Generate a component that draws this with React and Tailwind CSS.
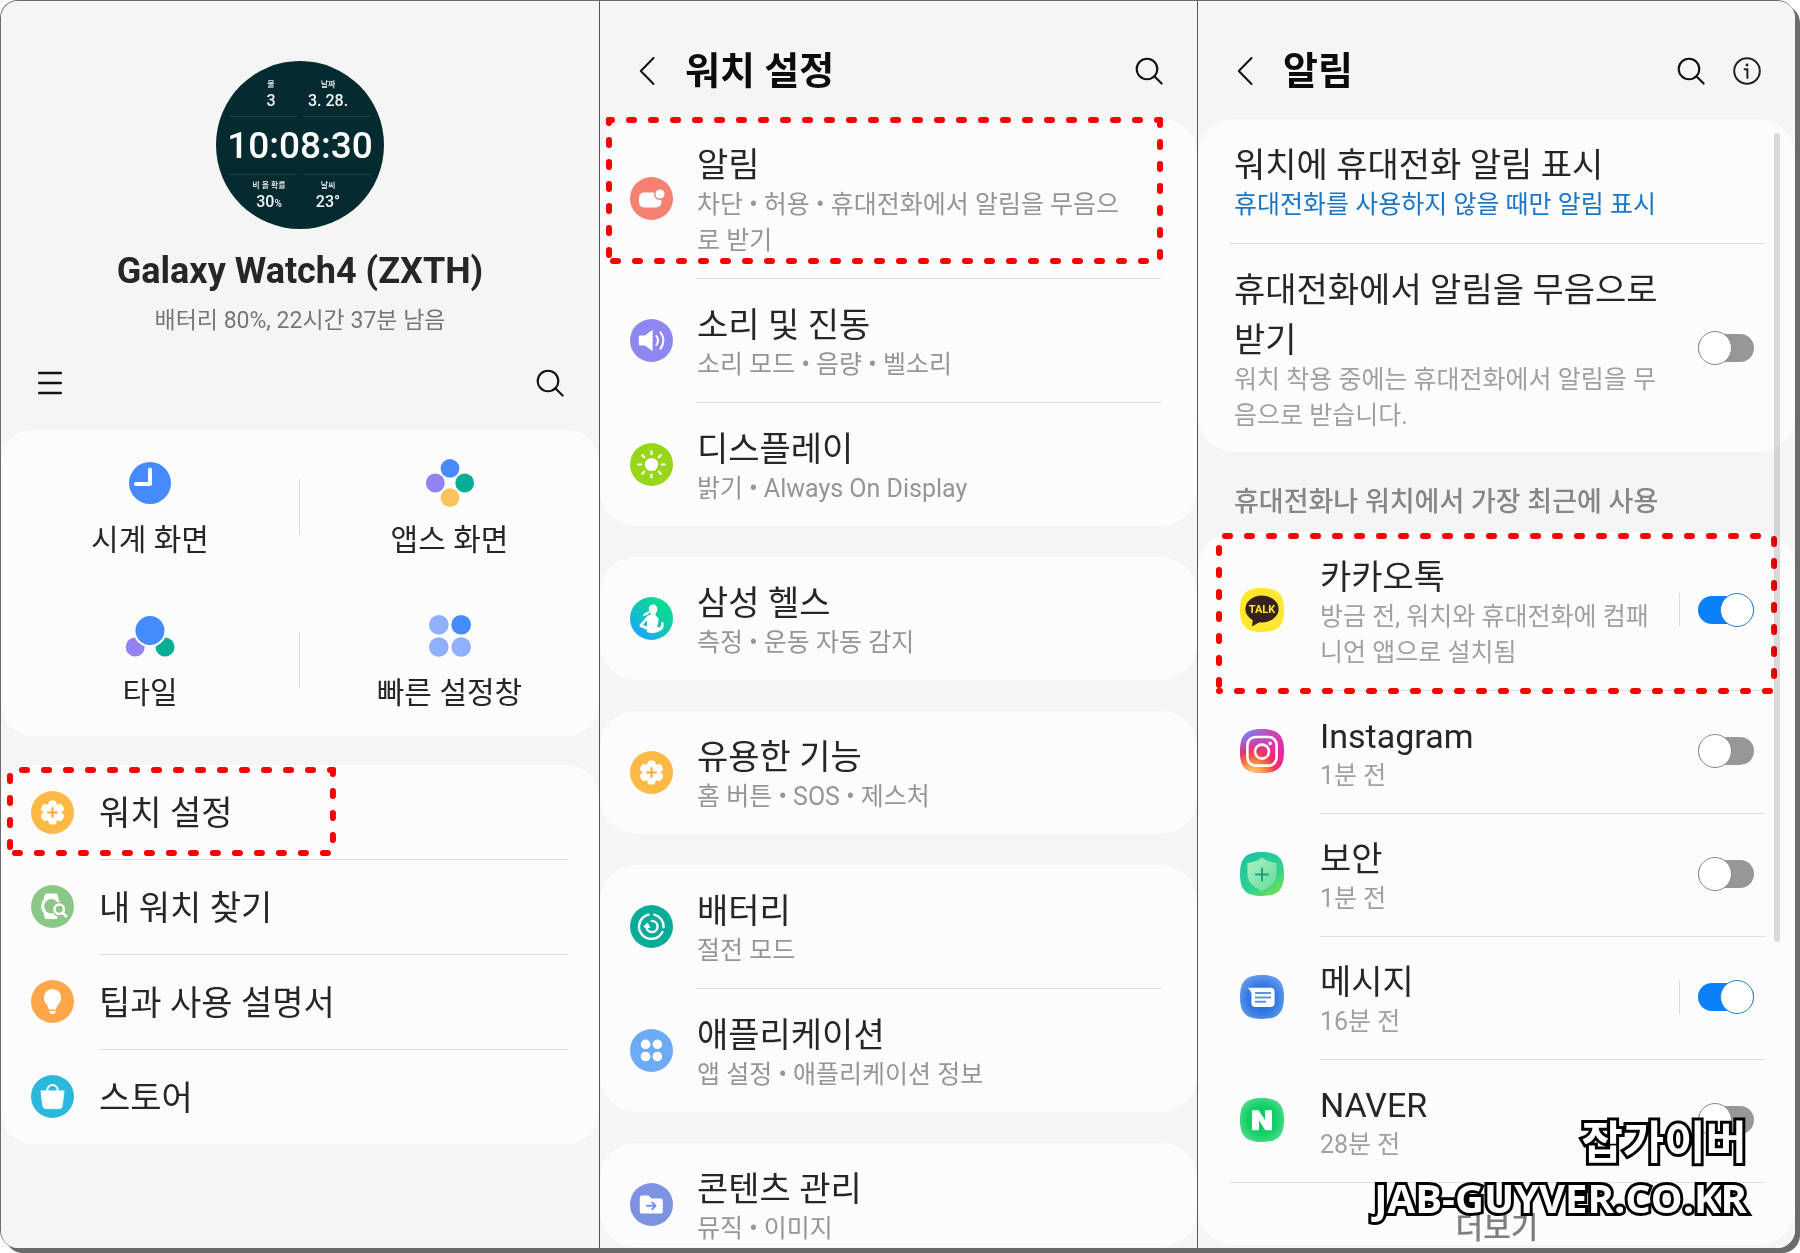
import React from "react";

/* ---------- icons ---------- */

function SearchIcon() {
  return (
    <svg viewBox="0 0 28 28" className="size-7" fill="none" stroke="#111" strokeWidth="2.1" strokeLinecap="round">
      <circle cx="12" cy="12" r="10.3" />
      <path d="M19.6 19.6 L26.6 26.6" />
    </svg>
  );
}

function InfoIcon() {
  return (
    <svg viewBox="0 0 28 28" className="size-7" fill="none" stroke="#222" strokeWidth="2" strokeLinecap="round" strokeLinejoin="round">
      <circle cx="14" cy="14" r="12.8" />
      <path d="M11.6 12.2 H14.4 V21" />
      <circle cx="14" cy="8" r="1.4" fill="#222" stroke="none" />
    </svg>
  );
}

function BackIcon() {
  return (
    <svg viewBox="0 0 16 28" className="h-7 w-4" fill="none" stroke="#111" strokeWidth="2" strokeLinecap="round" strokeLinejoin="round">
      <path d="M14.5 1 L1.8 14 L14.5 27" />
    </svg>
  );
}

function MenuIcon() {
  return (
    <svg viewBox="0 0 24 24" className="size-6" fill="none" stroke="#111" strokeWidth="2.4" strokeLinecap="round">
      <path d="M1.2 2 H22.8 M1.2 12 H22.8 M1.2 22 H22.8" />
    </svg>
  );
}

function Disc({ color, children }) {
  return (
    <svg viewBox="0 0 43 43" className="size-[43px] shrink-0">
      <circle cx="21.5" cy="21.5" r="21.5" fill={color} />
      {children}
    </svg>
  );
}

function GearIcon() {
  return (
    <Disc color="#fdb945">
      <g fill="#fff">
        <circle cx="21.5" cy="21.5" r="9.4" />
        {[0, 60, 120, 180, 240, 300].map((a) => (
          <rect key={a} x="17.6" y="9.4" width="7.8" height="8" rx="2.6" transform={`rotate(${a} 21.5 21.5)`} />
        ))}
      </g>
      <path d="M21.5 17 V26 M17 21.5 H26" stroke="#f8a92c" strokeWidth="1.9" strokeLinecap="round" />
    </Disc>
  );
}

function FindIcon() {
  return (
    <Disc color="#8bc786">
      <path d="M14.6 9 H25.6 L27.2 13.6 H13 Z M13 29 H27 L25.6 33.6 H14.6 Z" fill="#fff" stroke="#fff" strokeWidth="1" strokeLinejoin="round" />
      <circle cx="20" cy="21.3" r="10" fill="#fff" />
      <circle cx="20.4" cy="21.3" r="7.2" fill="#8bc786" />
      <circle cx="28.6" cy="24.4" r="7.4" fill="#8bc786" />
      <circle cx="28.2" cy="24.2" r="4.7" fill="#8bc786" stroke="#fff" strokeWidth="2.5" />
      <path d="M32 28 L35 31.2" stroke="#fff" strokeWidth="2.8" strokeLinecap="round" />
      <path d="M14.8 29 H23 L24 33.6 H14.6 Z" fill="#fff" />
    </Disc>
  );
}

function BulbIcon() {
  return (
    <Disc color="#fea74a">
      <path d="M21.5 9 A8.7 8.7 0 0 0 12.8 17.7 C12.8 22.5 17 24.4 17.6 28.4 Q17.8 29.6 19 29.6 H24 Q25.2 29.6 25.4 28.4 C26 24.4 30.2 22.5 30.2 17.7 A8.7 8.7 0 0 0 21.5 9 Z" fill="#fff" />
      <path d="M18.2 31 H24.8 Q24.4 34 21.5 34 Q18.6 34 18.2 31 Z" fill="#fff" />
    </Disc>
  );
}

function BagIcon() {
  return (
    <Disc color="#2ab9dc">
      <path d="M9.8 15.8 H33.2 L31.4 30.6 Q31 33.8 28 33.8 H15 Q12 33.8 11.6 30.6 Z" fill="#fff" stroke="#fff" strokeWidth="0.6" strokeLinejoin="round" />
      <path d="M16.2 16.4 V15.4 A5.3 5.3 0 0 1 26.8 15.4 V16.4" fill="none" stroke="#fff" strokeWidth="2" />
    </Disc>
  );
}

function NotificationIcon() {
  return (
    <Disc color="#f68171">
      <rect x="9" y="15.6" width="22.4" height="14.8" rx="5" fill="#fff" />
      <circle cx="30" cy="17" r="6" fill="#f68171" />
      <circle cx="30" cy="17" r="4.6" fill="#fff" />
    </Disc>
  );
}

function SoundIcon() {
  return (
    <Disc color="#8f87f0">
      <path d="M10.2 16.6 H15 L22.6 10.8 V32.2 L15 26.4 H10.2 Q8.8 26.4 8.8 25 V18 Q8.8 16.6 10.2 16.6 Z" fill="#fff" />
      <g fill="none" stroke="#fff" strokeWidth="2" strokeLinecap="round">
        <path d="M26.4 17 Q29.6 21.5 26.4 26" />
        <path d="M30.4 13.2 Q36.6 21.5 30.4 29.8" />
      </g>
    </Disc>
  );
}

function SunIcon() {
  return (
    <Disc color="#98d61a">
      <circle cx="21.5" cy="21.5" r="6.6" fill="#fff" />
      {[0, 45, 90, 135, 180, 225, 270, 315].map((a) => (
        <path key={a} d="M21.5 8.4 V11.2" stroke="#fff" strokeWidth="2.2" strokeLinecap="round" transform={`rotate(${a} 21.5 21.5)`} />
      ))}
    </Disc>
  );
}

function HealthIcon() {
  return (
    <Disc color="url(#healthFill)">
      <defs>
        <linearGradient id="healthFill" x1="0.15" y1="0.9" x2="0.8" y2="0.2">
          <stop offset="0" stopColor="#1ca6ff" />
          <stop offset="0.55" stopColor="#12c6b4" />
          <stop offset="1" stopColor="#08dc92" />
        </linearGradient>
      </defs>
      <ellipse cx="23" cy="12.4" rx="4.3" ry="5" fill="#fff" />
      <path d="M18.4 14.2 Q15 15.4 12.4 18.4 Q16.4 19.4 19.2 16.6 Z" fill="#fff" />
      <path d="M20.8 15 H25.6 V18.4 Q28.4 20 28.4 23.4 Q28.4 26.6 27 29.4 Q29 31.2 30.6 29.4 Q31.6 28 31.2 25.8 Q32 24.2 33.4 25.4 Q34.6 30.4 31.4 33 Q25.4 38 17.4 35.2 Q15.8 34.4 17.4 33 L10 29.8 Q8.8 29 9.6 27.8 L17 19.6 Q18.6 18 20.8 17.6 Z" fill="#fff" />
      <path d="M16.8 23.2 L13 27.8 L16.4 29.8 Q17.6 26.6 16.8 23.2 Z" fill="#19b8d0" />
    </Disc>
  );
}

function BatteryIcon() {
  return (
    <Disc color="#08ac98">
      <g fill="none" stroke="#fff" strokeWidth="2.4" strokeLinecap="round">
        <path d="M18.6 9.6 A12.3 12.3 0 1 0 32.4 27" />
        <path d="M24.4 9.6 A12.3 12.3 0 0 1 33.6 22.2" />
        <path d="M21.8 15.9 A5.6 5.6 0 1 1 16.4 22.6" />
      </g>
      <path d="M13.8 21.8 L17.4 18 L20 22.6 Z" fill="#fff" stroke="#fff" strokeLinejoin="round" />
    </Disc>
  );
}

function AppsIcon() {
  return (
    <Disc color="#6cabf4">
      <g fill="#fff">
        <circle cx="15.6" cy="15.3" r="4.8" />
        <circle cx="27.4" cy="15.3" r="4.8" />
        <circle cx="15.6" cy="27.5" r="4.8" />
        <circle cx="27.4" cy="27.5" r="4.8" />
      </g>
    </Disc>
  );
}

function FolderIcon() {
  return (
    <Disc color="#7c93e2">
      <path d="M12 12.6 H18.4 L21.4 15.6 H30.6 Q32.8 15.6 32.8 17.8 V28.4 Q32.8 30.6 30.6 30.6 H12 Q9.8 30.6 9.8 28.4 V14.8 Q9.8 12.6 12 12.6 Z" fill="#fff" />
      <path d="M17 22.8 H25.4 M22.2 19.4 L25.6 22.8 L22.2 26.2" fill="none" stroke="#7c93e2" strokeWidth="2" strokeLinecap="round" strokeLinejoin="round" />
    </Disc>
  );
}

function ClockIcon() {
  return (
    <svg viewBox="0 0 50 50" className="size-[50px]">
      <circle cx="25" cy="25" r="21" fill="#468bfd" />
      <path d="M25 11.4 V26 H11" fill="none" stroke="#fff" strokeWidth="4" strokeLinecap="round" strokeLinejoin="round" />
    </svg>
  );
}

function AppsScreenIcon() {
  return (
    <svg viewBox="0 0 50 50" className="size-[50px]">
      <circle cx="25" cy="10.4" r="9.4" fill="#468bfd" />
      <circle cx="10.3" cy="25" r="9.4" fill="#9183f0" />
      <circle cx="39.7" cy="25" r="9.4" fill="#06ae95" />
      <circle cx="25" cy="39.6" r="9.4" fill="#fac25e" />
    </svg>
  );
}

function TilesIcon() {
  return (
    <svg viewBox="0 0 50 50" className="size-[50px]">
      <circle cx="10.2" cy="36" r="9.5" fill="#9183f0" />
      <circle cx="40" cy="36" r="9.5" fill="#06ae95" />
      <circle cx="25" cy="19.4" r="15.6" fill="#468bfd" stroke="#fcfcfc" strokeWidth="2.2" />
    </svg>
  );
}

function QuickPanelIcon() {
  return (
    <svg viewBox="0 0 50 50" className="size-[50px]">
      <circle cx="13.8" cy="13.8" r="9.8" fill="#8fb1fb" />
      <circle cx="36.2" cy="13.8" r="9.8" fill="#468bfd" />
      <circle cx="13.8" cy="36" r="9.8" fill="#8fb1fb" />
      <circle cx="36.2" cy="36" r="9.8" fill="#8fb1fb" />
    </svg>
  );
}

const squircle = "M22 0 C38 0 44 6 44 22 C44 38 38 44 22 44 C6 44 0 38 0 22 C0 6 6 0 22 0 Z";

function TalkIcon() {
  return (
    <svg viewBox="0 0 44 44" className="size-11">
      <path d={squircle} fill="#fde82f" />
      <ellipse cx="22" cy="21" rx="16.6" ry="13.4" fill="#37221f" />
      <path d="M13 30 L12 38.4 L21.6 33 Z" fill="#37221f" />
      <text x="22" y="25.2" textAnchor="middle" fill="#fde82f" fontSize="11" fontWeight="700" fontFamily="Roboto, sans-serif">TALK</text>
    </svg>
  );
}

function InstagramIcon() {
  return (
    <svg viewBox="0 0 44 44" className="size-11">
      <defs>
        <linearGradient id="igBase" x1="0.1" y1="0" x2="0.8" y2="0.8">
          <stop offset="0" stopColor="#6d86f2" />
          <stop offset="0.4" stopColor="#c24bbd" />
          <stop offset="1" stopColor="#f0209a" />
        </linearGradient>
        <radialGradient id="igGlow" cx="0.3" cy="1.05" r="0.85">
          <stop offset="0" stopColor="#ffe08a" />
          <stop offset="0.35" stopColor="#ff8a3a" />
          <stop offset="0.65" stopColor="#f5304f" stopOpacity="0.8" />
          <stop offset="1" stopColor="#d62fa0" stopOpacity="0" />
        </radialGradient>
      </defs>
      <path d={squircle} fill="url(#igBase)" />
      <path d={squircle} fill="url(#igGlow)" />
      <rect x="7.4" y="8" width="29.2" height="28.6" rx="8" fill="none" stroke="#fff" strokeWidth="2.6" />
      <circle cx="22" cy="22.6" r="7" fill="none" stroke="#fff" strokeWidth="2.6" />
      <circle cx="30.2" cy="14.4" r="1.8" fill="#fff" />
    </svg>
  );
}

function SecurityIcon() {
  return (
    <svg viewBox="0 0 44 44" className="size-11">
      <defs>
        <linearGradient id="secBase" x1="0.2" y1="0" x2="0.9" y2="1">
          <stop offset="0" stopColor="#1fc3a4" />
          <stop offset="0.6" stopColor="#2fd28b" />
          <stop offset="1" stopColor="#7fe04e" />
        </linearGradient>
        <linearGradient id="secShield" x1="0" y1="0" x2="1" y2="1">
          <stop offset="0" stopColor="#aef0c0" />
          <stop offset="1" stopColor="#62dc9c" />
        </linearGradient>
      </defs>
      <path d={squircle} fill="url(#secBase)" />
      <path d="M22 5.6 Q28 10.4 36.6 11 V22 Q36 33.4 22 39 Q8 33.4 7.4 22 V11 Q16 10.4 22 5.6 Z" fill="url(#secShield)" />
      <path d="M22 16.6 V28.6 M16 22.6 H28" stroke="#1ea07e" strokeWidth="2" strokeLinecap="round" />
    </svg>
  );
}

function MessagesIcon() {
  return (
    <svg viewBox="0 0 44 44" className="size-11">
      <defs>
        <radialGradient id="msgBase" cx="0.5" cy="0.55" r="0.6">
          <stop offset="0" stopColor="#1a63d8" />
          <stop offset="0.5" stopColor="#2f77e2" />
          <stop offset="1" stopColor="#6a9eec" />
        </radialGradient>
      </defs>
      <path d={squircle} fill="url(#msgBase)" />
      <path d="M8 12.8 H30.6 Q34.6 12.8 34.6 16.8 V28 Q34.6 32 30.6 32 H15.4 Q11.4 32 11.4 28 V17.4 Z" fill="#fff" />
      <path d="M15 18 H31 M15 22.4 H31 M15 26.8 H26" stroke="#5b94ea" strokeWidth="2" />
    </svg>
  );
}

function NaverIcon() {
  return (
    <svg viewBox="0 0 44 44" className="size-11">
      <defs>
        <radialGradient id="navBase" cx="0.5" cy="0.5" r="0.6">
          <stop offset="0" stopColor="#04c85a" />
          <stop offset="0.55" stopColor="#12cf68" />
          <stop offset="1" stopColor="#5cdd92" />
        </radialGradient>
      </defs>
      <path d={squircle} fill="url(#navBase)" />
      <path d="M12 12.2 H18.6 L25 22 V12.2 H32 V32.2 H25.4 L19 22.4 V32.2 H12 Z" fill="#fff" />
    </svg>
  );
}

/* ---------- shared pieces ---------- */

/* Dashed marker drawn over a block; `offsets` sets the dash phase of the left, top, right and bottom side. */
function Marker({ offsets, className }) {
  const [left, top, right, bottom] = offsets;
  return (
    <svg
      aria-hidden="true"
      className={`pointer-events-none absolute overflow-visible ${className}`}
      stroke="#f90000"
      strokeWidth="6"
      strokeLinecap="round"
      strokeDasharray="5 17"
    >
      <line x1="0" y1="100%" x2="0" y2="0" strokeDashoffset={left} />
      <line x1="0" y1="0" x2="100%" y2="0" strokeDashoffset={top} />
      <line x1="100%" y1="0" x2="100%" y2="100%" strokeDashoffset={right} />
      <line x1="100%" y1="100%" x2="0" y2="100%" strokeDashoffset={bottom} />
    </svg>
  );
}

function Switch({ id, on }) {
  return (
    <input
      id={id}
      type="checkbox"
      role="switch"
      defaultChecked={on}
      className="relative h-7 w-14 shrink-0 appearance-none rounded-full bg-[#979797] before:absolute before:-top-[3px] before:left-0 before:size-[34px] before:rounded-full before:border before:border-[#8a8a8a] before:bg-white checked:bg-[#0a80fb] checked:before:left-[22px] checked:before:border-[#2b7fd0]"
    />
  );
}

function Header({ title, children }) {
  return (
    <header className="flex h-[118px] items-center pt-[22px] pr-[34px] pl-[39px]">
      <button type="button" aria-label="뒤로">
        <BackIcon />
      </button>
      <h1 className="ml-[30px] flex-1 text-[38px] leading-[50px] font-bold text-[#0c0c0c]">{title}</h1>
      <div className="flex items-center gap-7">{children}</div>
    </header>
  );
}

function SettingRow({ icon, title, first, last, children }) {
  return (
    <a href="#" className="flex pl-[30px]">
      <span className={`flex w-[66px] shrink-0 items-center ${last ? "pt-[19px]" : ""}`}>{icon}</span>
      <span className={`mr-9 block flex-1 pt-[21px] pl-px ${last ? "" : "pb-[19px]"} ${first ? "" : "border-t border-[#e0e0e0]"}`}>
        <span className="block text-[34px] leading-[50px] text-[#262626]">{title}</span>
        <span className="-mt-[3px] block text-[25px] leading-9 text-[#959595]">{children}</span>
      </span>
    </a>
  );
}

function AppRow({ id, icon, title, on, first, children }) {
  return (
    <div className="flex pl-[42px]">
      <span className="flex w-20 shrink-0 items-center pb-0.5">{icon}</span>
      <div className={`mr-[30px] flex flex-1 items-center pr-[11px] ${first ? "" : "border-t border-[#e0e0e0]"}`}>
        <label htmlFor={id} className="block flex-1 pt-5 pb-[19px]">
          <span className="block text-[34px] leading-[50px] text-[#262626]">{title}</span>
          <span className="-mt-[3px] block text-[25px] leading-9 text-[#a0a0a0]">{children}</span>
        </label>
        <span className={`mb-0.5 flex h-[34px] items-center pl-[18px] ${on ? "border-l border-[#dedede]" : ""}`}>
          <Switch id={id} on={on} />
        </span>
      </div>
    </div>
  );
}

function WatchCell({ label, value, unit }) {
  return (
    <div className="flex flex-col items-center">
      <span className="text-[8px] leading-[10px] font-medium">{label}</span>
      <span className="text-base leading-[22px] font-medium">
        {value}
        {unit && <span className="text-[10px]">{unit}</span>}
      </span>
    </div>
  );
}

/* ---------- screens ---------- */

const homeTiles = [
  ["시계 화면", ClockIcon],
  ["앱스 화면", AppsScreenIcon],
  ["타일", TilesIcon],
  ["빠른 설정창", QuickPanelIcon],
];

const homeMenu = [
  ["워치 설정", GearIcon],
  ["내 워치 찾기", FindIcon],
  ["팁과 사용 설명서", BulbIcon],
  ["스토어", BagIcon],
];

function HomeScreen() {
  return (
    <section className="bg-[#f5f5f5] pt-[60px]">
      <div className="mx-auto size-[168px] overflow-hidden rounded-full bg-[#052a30] px-[13px] pt-[19px] text-[#f2f6f6]">
        <div className="grid grid-cols-2 gap-x-[6px]">
          <div className="border-b border-[#1f4347] pb-1 pl-4">
            <WatchCell label="물" value="3" />
          </div>
          <div className="border-b border-[#1f4347] pr-[18px] pb-1">
            <WatchCell label="날짜" value="3. 28." />
          </div>
        </div>
        <p className="-mx-3 text-center text-[37px] leading-[57px] font-medium whitespace-nowrap text-white">10:08:30</p>
        <div className="grid grid-cols-2 gap-x-[6px]">
          <div className="border-t border-[#1f4347] pt-1.5 pl-3">
            <WatchCell label="비 올 확률" value="30" unit="%" />
          </div>
          <div className="border-t border-[#1f4347] pt-1.5 pr-[18px]">
            <WatchCell label="날씨" value="23°" />
          </div>
        </div>
      </div>
      <h1 className="mt-5 text-center text-[36px] leading-[44px] font-bold text-[#262626]">Galaxy Watch4 (ZXTH)</h1>
      <p className="mt-[14px] text-center text-[23px] leading-7 text-[#767676]">배터리 80%, 22시간 37분 남음</p>
      <div className="mt-8 flex h-8 items-center justify-between pr-[35px] pl-[37px]">
        <button type="button" aria-label="메뉴">
          <MenuIcon />
        </button>
        <button type="button" aria-label="검색">
          <SearchIcon />
        </button>
      </div>

      <nav className="mt-[31px] grid grid-cols-2 rounded-[32px] bg-[#fcfcfc]">
        {homeTiles.map(([label, Icon], i) => (
          <a key={label} href="#" className="flex items-center">
            <span className="flex flex-1 flex-col items-center pt-7 pb-[23px]">
              <Icon />
              <span className="mt-3 text-[30px] leading-10 text-[#262626]">{label}</span>
            </span>
            {i % 2 === 0 && <span className="h-14 w-px bg-[#dcdcdc]" />}
          </a>
        ))}
      </nav>

      <nav className="relative mt-[29px] rounded-[32px] bg-[#fcfcfc]">
        {homeMenu.map(([label, Icon], i) => (
          <a key={label} href="#" className="flex pl-[30px]">
            <span className="flex w-[68px] shrink-0 items-center">
              <Icon />
            </span>
            <span className={`mr-[31px] block flex-1 pt-[23px] pb-[21px] text-[34px] leading-[50px] text-[#262626] ${i ? "border-t border-[#e0e0e0]" : ""}`}>
              {label}
            </span>
          </a>
        ))}
        <Marker offsets={[-6, -12, 1, -5]} className="top-[5px] left-[9px] h-[83px] w-[54%]" />
      </nav>
    </section>
  );
}

function SettingsScreen() {
  return (
    <section className="border-l border-[#555] bg-[#f5f5f5]">
      <Header title="워치 설정">
        <button type="button" aria-label="검색">
          <SearchIcon />
        </button>
      </Header>
      <div className="flex flex-col gap-[31px]">
        <div className="relative rounded-[36px] bg-[#fcfcfc]">
          <SettingRow first icon={<NotificationIcon />} title="알림">
            차단 • 허용 • 휴대전화에서 알림을 무음으
            <br />로 받기
          </SettingRow>
          <SettingRow icon={<SoundIcon />} title="소리 및 진동">소리 모드 • 음량 • 벨소리</SettingRow>
          <SettingRow icon={<SunIcon />} title="디스플레이">밝기 • Always On Display</SettingRow>
          <Marker offsets={[-6, 2, 0, -14]} className="top-px left-[9px] h-[141px] w-[calc(100%-46px)]" />
        </div>
        <div className="rounded-[36px] bg-[#fcfcfc]">
          <SettingRow first icon={<HealthIcon />} title="삼성 헬스">측정 • 운동 자동 감지</SettingRow>
        </div>
        <div className="rounded-[36px] bg-[#fcfcfc]">
          <SettingRow first icon={<GearIcon />} title="유용한 기능">홈 버튼 • SOS • 제스처</SettingRow>
        </div>
        <div className="rounded-[36px] bg-[#fcfcfc]">
          <SettingRow first icon={<BatteryIcon />} title="배터리">절전 모드</SettingRow>
          <SettingRow icon={<AppsIcon />} title="애플리케이션">앱 설정 • 애플리케이션 정보</SettingRow>
        </div>
        <div className="rounded-[36px] bg-[#fcfcfc]">
          <SettingRow first last icon={<FolderIcon />} title="콘텐츠 관리">뮤직 • 이미지</SettingRow>
        </div>
      </div>
    </section>
  );
}

function NotificationsScreen() {
  return (
    <section className="relative border-l border-[#555] bg-[#f5f5f5] pb-[3px]">
      <Header title="알림">
        <button type="button" aria-label="검색">
          <SearchIcon />
        </button>
        <button type="button" aria-label="정보">
          <InfoIcon />
        </button>
      </Header>

      <div className="rounded-[36px] bg-[#fcfcfc] pr-[30px] pl-[31px]">
        <a href="#" className="block pt-[21px] pb-5 pl-[5px]">
          <span className="block text-[34px] leading-[50px] text-[#262626]">워치에 휴대전화 알림 표시</span>
          <span className="-mt-[3px] block text-[25px] leading-9 text-[#1b76c8]">휴대전화를 사용하지 않을 때만 알림 표시</span>
        </a>
        <div className="flex items-center border-t border-[#e0e0e0] pr-[11px] pl-[5px]">
          <label htmlFor="mute" className="block flex-1 pt-[21px] pb-[18px]">
            <span className="block text-[34px] leading-[50px] text-[#262626]">
              휴대전화에서 알림을 무음으로
              <br />
              받기
            </span>
            <span className="-mt-[3px] block text-[25px] leading-9 text-[#a0a0a0]">
              워치 착용 중에는 휴대전화에서 알림을 무
              <br />
              음으로 받습니다.
            </span>
          </label>
          <Switch id="mute" />
        </div>
      </div>

      <h2 className="px-9 pt-[30px] pb-[10px] text-[27px] leading-10 font-medium text-[#868686]">휴대전화나 워치에서 가장 최근에 사용</h2>

      <div className="relative rounded-[36px] bg-[#fcfcfc]">
        <AppRow first on id="talk" icon={<TalkIcon />} title="카카오톡">
          방금 전, 워치와 휴대전화에 컴패
          <br />
          니언 앱으로 설치됨
        </AppRow>
        <AppRow id="instagram" icon={<InstagramIcon />} title="Instagram">1분 전</AppRow>
        <AppRow id="security" icon={<SecurityIcon />} title="보안">1분 전</AppRow>
        <AppRow on id="messages" icon={<MessagesIcon />} title="메시지">16분 전</AppRow>
        <AppRow id="naver" icon={<NaverIcon />} title="NAVER">28분 전</AppRow>
        <div className="mr-[30px] ml-[31px] border-t border-[#e0e0e0]">
          <button type="button" className="block w-full pt-7 text-center text-[30px] leading-[34px] font-medium text-[#7e7e7e]">
            더보기
          </button>
        </div>
        <Marker offsets={[-6, -6, -3, -4]} className="top-1 left-[21px] h-[155px] w-[calc(100%-42px)]" />
      </div>

      <div className="absolute top-[132px] right-[15px] h-[809px] w-1.5 rounded-full bg-[#dcdcdc] mix-blend-multiply" />

      <div
        className="pointer-events-none absolute right-[48px] bottom-[22px] text-right font-['Open_Sans','Noto_Sans_CJK_KR',sans-serif] font-bold text-white [-webkit-text-stroke:6px_#000] [paint-order:stroke_fill]"
      >
        <p className="text-[45px] leading-[56px]">잡가이버</p>
        <p className="text-[40px] leading-[56px]">JAB-GUYVER.CO.KR</p>
      </div>
    </section>
  );
}

export default function App() {
  return (
    <div className="bg-white pr-[5px] pb-[5px] font-['Roboto','Noto_Sans_CJK_KR',sans-serif]">
      <main className="grid grid-cols-3 overflow-hidden rounded-[18px] border-t border-l border-[#6b6b6b] bg-[#f5f5f5] shadow-[5px_5px_0_#6b6b6b]">
        <HomeScreen />
        <SettingsScreen />
        <NotificationsScreen />
      </main>
    </div>
  );
}
